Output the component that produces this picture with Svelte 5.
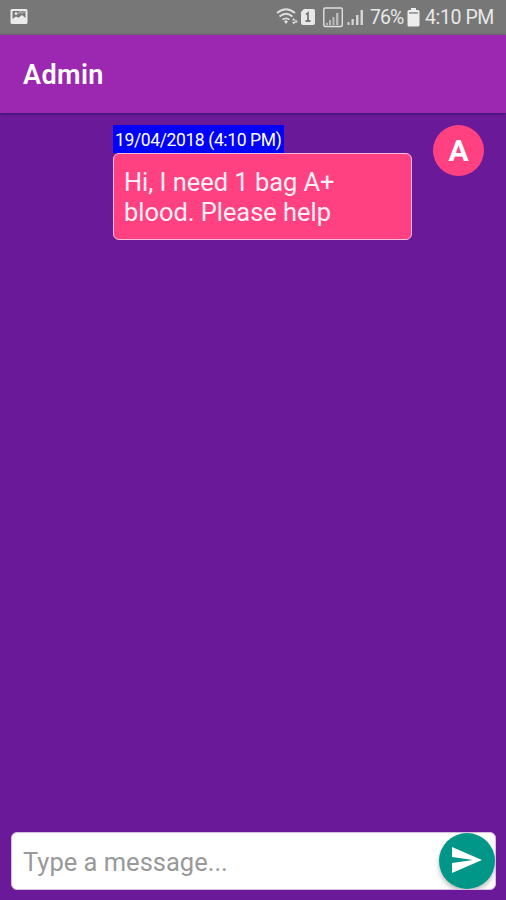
<script>
  const messages = [
    { time: '19/04/2018 (4:10 PM)', lines: ['Hi, I need 1 bag A+', 'blood. Please help'], initial: 'A' }
  ];
</script>

<div class="screen">
  <div class="status">
    <svg class="photo" width="18" height="18" viewBox="0 0 18 18">
      <path fill="#ebebeb" fill-rule="evenodd" d="M2 1h14q1.500 0 1.500 1.500v12q0 1.500-1.500 1.500H2Q.5 16 .5 14.500v-12Q.5 1 2 1ZM2.500 3v8l3.500-2.500 2.500 1.200L12 7l3.500 3V3Z" />
      <circle cx="6" cy="5.600" r="1.400" fill="#ebebeb" />
      <path d="M9 6V4h3v2M13 4h2" fill="none" stroke="#c4c4c4" />
    </svg>
    <svg class="signals" width="92" height="24" viewBox="0 0 92 24">
      <g fill="none" stroke="#dedede" stroke-width="1.700">
        <path d="M1 8Q10 .5 19 8M3.500 11.500q6.500-5.500 13 0M6.500 14.700q3.500-2.700 7 0" />
      </g>
      <path fill="#dedede" d="m8 16.500 2-1.500 2 1.500-2 2.500ZM17.700 13l1.800 2.500h-3.500ZM16 17h3.500l-1.700 2.500Z" />
      <circle cx="20" cy="16.500" r="1.500" fill="#cacaca" />
      <path fill="#e8e8e8" d="M28 4h9q2 0 2 2v12q0 2-2 2H27q-2 0-2-2V7Z" />
      <path d="M30 9.500 32 8v8M29.500 16h5" fill="none" stroke="#777" stroke-width="1.800" />
      <rect x="47.800" y="3" width="18.500" height="18.500" rx="1.500" fill="none" stroke="#e0e0e0" stroke-width="1.400" />
      <path fill="#b9b9b9" d="M50 18h2v2h-2zM53 15h2v5h-2zM56.500 12h2v8h-2zM60 8h2.500v12H60z" />
      <path fill="#d4d4d4" d="M71.500 17h2v3h-2zM75.500 14h2.300v6h-2.300zM80 10h2.500v10H80zM84.500 5H87v15h-2.500z" />
    </svg>
    <span class="pct">76%</span>
    <svg class="battery" width="13" height="19" viewBox="0 0 13 19">
      <path fill="#ededed" d="M4 0h5v2h2q1.500 0 1.500 1.500V17q0 1.500-1.500 1.500H2Q.5 18.500.5 17V3.500Q.5 2 2 2h2Z" />
      <path fill="#999" d="M2 4h9v1.800H2z" />
    </svg>
    <span class="clock">4:10 PM</span>
  </div>

  <header><h1>Admin</h1></header>

  <main>
    {#each messages as message}
      <article>
        <div class="message">
          <time>{message.time}</time>
          <p>
            {#each message.lines as line}<span>{line}</span>{/each}
          </p>
        </div>
        <div class="avatar"><span>{message.initial}</span></div>
      </article>
    {/each}
  </main>

  <footer>
    <div class="composer">
      <span class="hint">Type a message...</span>
      <button aria-label="Send">
        <svg width="30" height="26" viewBox="0 0 30 26"><path fill="#fff" d="M0 0 30 13 0 26V16l21-3L0 10Z" /></svg>
      </button>
    </div>
  </footer>
</div>

<style>
  :global(body) { margin: 0; }
  .screen {
    width: 506px; height: 900px; display: flex; flex-direction: column;
    background: #6a1a98; font-family: Roboto, sans-serif; overflow: hidden;
  }
  .status {
    height: 34.500px; flex: none; display: flex; align-items: center; background: #777;
    color: #e8e8e8; font-size: 19.500px; white-space: nowrap; box-sizing: border-box;
  }
  svg { display: block; flex: none; }
  .photo { margin-left: 10px; }
  .signals { margin-left: 248px; }
  .pct { width: 36px; margin-left: 2px; letter-spacing: -1px; padding-top: 1px; }
  .battery { margin-left: 1px; }
  .clock { margin-left: 5px; letter-spacing: -.4px; padding-top: 1px; }
  header {
    height: 78.500px; flex: none; display: flex; align-items: center; padding: 2px 0 0 23px;
    box-sizing: border-box; background: #9c27b0; box-shadow: 0 1px 3px #35106c; z-index: 1;
  }
  h1 { margin: 0; color: #fff; font-size: 27px; font-weight: 600; line-height: 30px; letter-spacing: .4px; }
  main { flex: 1; padding: 12px 22px 0 113px; }
  article { display: flex; align-items: flex-start; justify-content: space-between; }
  .message { width: 299px; }
  time {
    display: block; width: 171px; height: 28px; box-sizing: border-box; padding-left: 2px;
    background: #00f; color: #fff; font-size: 17.500px; line-height: 30px; white-space: nowrap; letter-spacing: -.38px;
  }
  p {
    height: 87px; margin: 0; padding: 14px 0 0 10px; box-sizing: border-box;
    border: 1.500px solid #f4bcdb; border-radius: 6px; background: #ff4081;
    color: #fff0f5; font-size: 25.400px; line-height: 29.500px;
  }
  p span { display: block; white-space: nowrap; }
  .avatar {
    width: 51px; height: 51px; border-radius: 50%; background: #ff4081; color: #fff;
    display: flex; align-items: center; justify-content: center;
    font-size: 30px; font-weight: 700; line-height: 36px;
  }
  .avatar span { padding-top: 1px; }
  footer { flex: none; padding: 0 10px 10px 11px; }
  .composer {
    height: 58px; display: flex; align-items: center; justify-content: space-between;
    box-sizing: border-box; padding-left: 11px; border: 1px solid #d9bde5; border-radius: 6px; background: #fff;
  }
  .hint { color: #999; font-size: 25.500px; white-space: nowrap; padding-top: 1px; }
  button {
    width: 56px; height: 56px; border: 0; border-radius: 50%; background: #009688; padding: 0;
    display: flex; align-items: center; justify-content: center; box-shadow: 0 3px 5px #0004; clip-path: inset(0 0 0 -8px);
  }
  button svg { margin-top: -2px; }
</style>
